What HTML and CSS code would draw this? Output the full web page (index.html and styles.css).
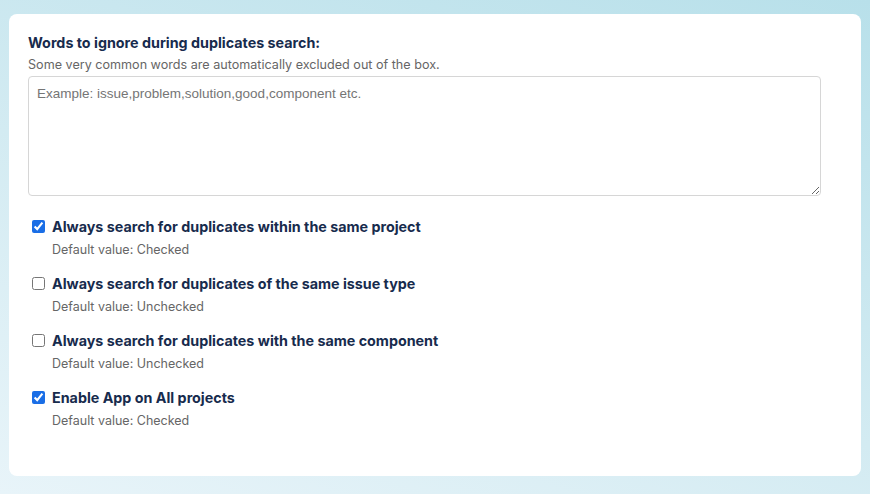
FILE: index.html
```html
<!DOCTYPE html>
<html>
<head>
<meta charset="utf-8">
<link rel="stylesheet" href="styles.css">
</head>
<body>
<div class="card">
  <div class="field">
    <label class="title" for="words">Words to ignore during duplicates search:</label>
    <div class="desc">Some very common words are automatically excluded out of the box.</div>
    <textarea id="words" class="area" placeholder="Example: issue,problem,solution,good,component etc."></textarea>
  </div>
  <div class="options">
    <div class="option">
      <label class="row"><input type="checkbox" class="cb" checked><span class="label">Always search for duplicates within the same project</span></label>
      <div class="hint">Default value: Checked</div>
    </div>
    <div class="option">
      <label class="row"><input type="checkbox" class="cb"><span class="label">Always search for duplicates of the same issue type</span></label>
      <div class="hint">Default value: Unchecked</div>
    </div>
    <div class="option">
      <label class="row"><input type="checkbox" class="cb"><span class="label">Always search for duplicates with the same component</span></label>
      <div class="hint">Default value: Unchecked</div>
    </div>
    <div class="option">
      <label class="row"><input type="checkbox" class="cb" checked><span class="label">Enable App on All projects</span></label>
      <div class="hint">Default value: Checked</div>
    </div>
  </div>
</div>
</body>
</html>
```
FILE: styles.css
```css
html, body {
  margin: 0;
  padding: 0;
}
body {
  width: 870px;
  height: 494px;
  overflow: hidden;
  background: linear-gradient(200deg, #b8e0ea 0%, #d3ebf2 55%, #e8f4f9 100%);
  font-family: Inter, "Noto Sans", sans-serif;
  padding: 14px 9px 0 9px;
  box-sizing: border-box;
}
.card {
  background: #ffffff;
  border-radius: 8px;
  height: 462px;
  box-sizing: border-box;
  padding: 32px 40px 0 19px;
}
.field {
  display: flex;
  flex-direction: column;
}
.title {
  font-size: 14.3px;
  font-weight: 700;
  color: #172b4d;
  line-height: 20px;
  margin-top: -13px;
  margin-bottom: 3px;
}
.desc {
  font-size: 12.6px;
  color: #666666;
  line-height: 18px;
}
.area {
  margin-top: 2px;
  height: 120px;
  width: 793px;
  box-sizing: border-box;
  border: 1px solid #d6d6d6;
  border-radius: 4px;
  padding: 9px 8px 7px;
  font-family: "Liberation Sans", Arial, sans-serif;
  font-size: 13.5px;
  resize: vertical;
}
.area::placeholder {
  color: #757575;
}
.options {
  display: flex;
  flex-direction: column;
  gap: 14px;
  margin-top: 20px;
  padding-left: 4px;
}
.option {
  display: flex;
  flex-direction: column;
}
.row {
  display: flex;
  align-items: center;
  gap: 7px;
  height: 20px;
}
.cb {
  margin: 0;
  width: 13px;
  height: 13px;
  accent-color: #1a6ee6;
}
.label {
  font-size: 14.3px;
  font-weight: 700;
  color: #172b4d;
}
.hint {
  font-size: 12.5px;
  color: #666666;
  line-height: 18px;
  margin-top: 5px;
  padding-left: 20px;
}
```
